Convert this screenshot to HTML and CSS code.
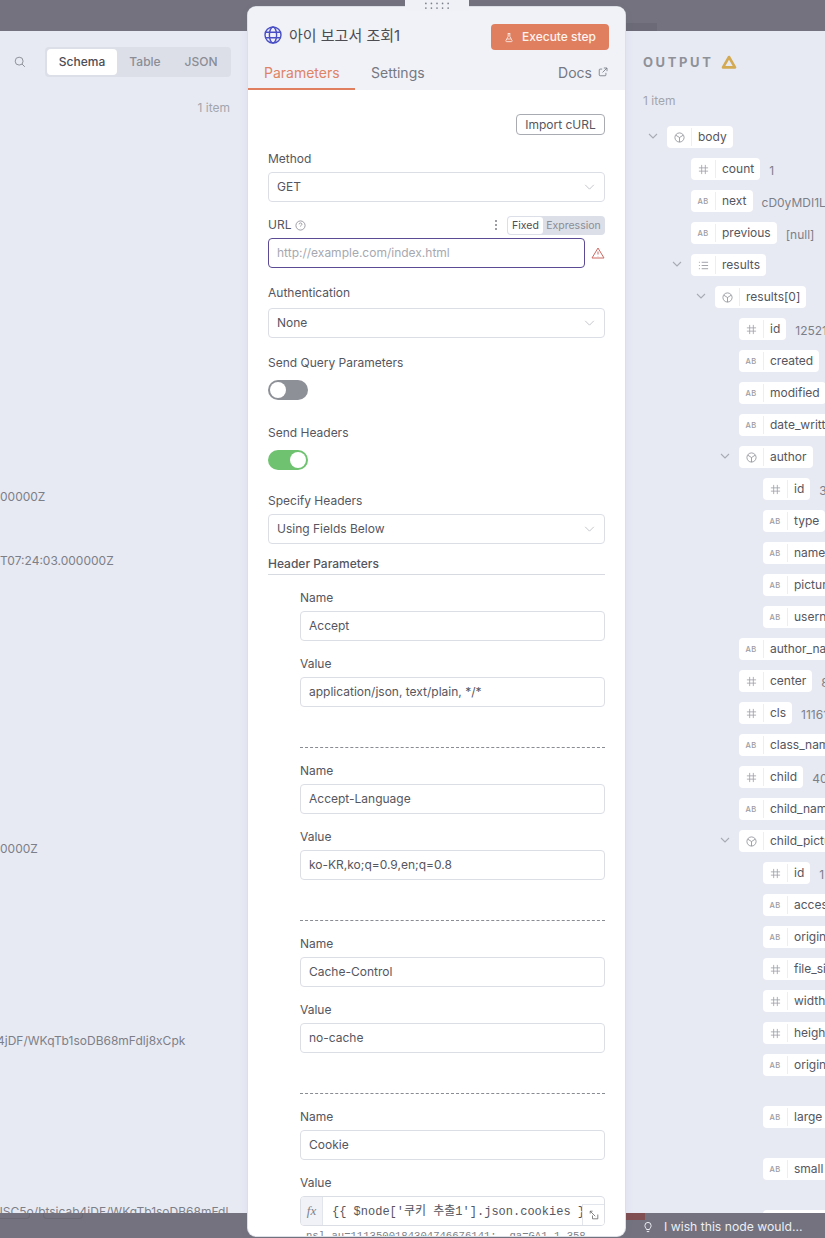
FILE: index.html
```html
<!DOCTYPE html>
<html lang="ko">
<head>
<meta charset="utf-8">
<title>아이 보고서 조회1</title>
<link rel="stylesheet" href="styles.css">
</head>
<body>
<div class="stage">
  <header class="topbar"><span class="topstrip"></span></header>

  <section class="input-pane">
    <div class="input-head">
      <svg class="search" viewBox="0 0 14 14"><circle cx="6" cy="6" r="4.6"/><path d="M9.400 9.400l3.200 3.200"/></svg>
      <div class="seg">
        <span class="seg-item on">Schema</span><span class="seg-item">Table</span><span class="seg-item">JSON</span>
      </div>
    </div>
    <div class="items">1 item</div>
    <div class="cut c1">00000Z</div>
    <div class="cut c2">T07:24:03.000000Z</div>
    <div class="cut c3">0000Z</div>
    <div class="cut c4">4jDF/WKqTb1soDB68mFdlj8xCpk</div>
    <div class="cut c5">JSC5o/btsjcab4jDF/WKqTb1soDB68mFdl</div>
  </section>

  <section class="output-pane">
    <div class="out-title"><span>OUTPUT</span>
      <svg class="warn-tri" viewBox="0 0 16 14"><path d="M8 2L14 12.400H2z"/></svg>
    </div>
    <div class="out-items">1 item</div>
    <div class="tree">
      <div class="row l0"><svg class="chev" viewBox="0 0 10 6"><path d="M1 1l4 4 4-4"/></svg><span class="pill"><span class="ico"><svg class="box" viewBox="0 0 12 12"><circle cx="6" cy="6" r="5"/><path d="M2 3.5L6 6l4-2.500M6 6v5"/></svg></span><span class="nm">body</span></span></div>
      <div class="row l1"><span class="pill"><span class="ico"><svg class="hash" viewBox="0 0 12 12"><path d="M4 1v10M8 1v10M1 4.200h10M1 7.800h10"/></svg></span><span class="nm">count</span></span><span class="val">1</span></div>
      <div class="row l1"><span class="pill"><span class="ico ab">AB</span><span class="nm">next</span></span><span class="val">cD0yMDI1L</span></div>
      <div class="row l1"><span class="pill"><span class="ico ab">AB</span><span class="nm">previous</span></span><span class="val">[null]</span></div>
      <div class="row l1"><svg class="chev" viewBox="0 0 10 6"><path d="M1 1l4 4 4-4"/></svg><span class="pill"><span class="ico"><svg class="lines" viewBox="0 0 12 12"><path d="M1 2.500h1M4 2.500h7M1 6h1M4 6h7M1 9.500h1M4 9.500h7"/></svg></span><span class="nm">results</span></span></div>
      <div class="row l2"><svg class="chev" viewBox="0 0 10 6"><path d="M1 1l4 4 4-4"/></svg><span class="pill"><span class="ico"><svg class="box" viewBox="0 0 12 12"><circle cx="6" cy="6" r="5"/><path d="M2 3.5L6 6l4-2.500M6 6v5"/></svg></span><span class="nm">results[0]</span></span></div>
      <div class="row l3"><span class="pill"><span class="ico"><svg class="hash" viewBox="0 0 12 12"><path d="M4 1v10M8 1v10M1 4.200h10M1 7.800h10"/></svg></span><span class="nm">id</span></span><span class="val">12521</span></div>
      <div class="row l3"><span class="pill"><span class="ico ab">AB</span><span class="nm">created</span></span></div>
      <div class="row l3"><span class="pill"><span class="ico ab">AB</span><span class="nm">modified</span></span></div>
      <div class="row l3"><span class="pill"><span class="ico ab">AB</span><span class="nm">date_written</span></span></div>
      <div class="row l3"><svg class="chev" viewBox="0 0 10 6"><path d="M1 1l4 4 4-4"/></svg><span class="pill"><span class="ico"><svg class="box" viewBox="0 0 12 12"><circle cx="6" cy="6" r="5"/><path d="M2 3.5L6 6l4-2.500M6 6v5"/></svg></span><span class="nm">author</span></span></div>
      <div class="row l4"><span class="pill"><span class="ico"><svg class="hash" viewBox="0 0 12 12"><path d="M4 1v10M8 1v10M1 4.200h10M1 7.800h10"/></svg></span><span class="nm">id</span></span><span class="val">3</span></div>
      <div class="row l4"><span class="pill"><span class="ico ab">AB</span><span class="nm">type</span></span></div>
      <div class="row l4"><span class="pill"><span class="ico ab">AB</span><span class="nm">name</span></span></div>
      <div class="row l4"><span class="pill"><span class="ico ab">AB</span><span class="nm">picture</span></span></div>
      <div class="row l4"><span class="pill"><span class="ico ab">AB</span><span class="nm">username</span></span></div>
      <div class="row l3"><span class="pill"><span class="ico ab">AB</span><span class="nm">author_name</span></span></div>
      <div class="row l3"><span class="pill"><span class="ico"><svg class="hash" viewBox="0 0 12 12"><path d="M4 1v10M8 1v10M1 4.200h10M1 7.800h10"/></svg></span><span class="nm">center</span></span><span class="val">8</span></div>
      <div class="row l3"><span class="pill"><span class="ico"><svg class="hash" viewBox="0 0 12 12"><path d="M4 1v10M8 1v10M1 4.200h10M1 7.800h10"/></svg></span><span class="nm">cls</span></span><span class="val">11161</span></div>
      <div class="row l3"><span class="pill"><span class="ico ab">AB</span><span class="nm">class_name</span></span></div>
      <div class="row l3"><span class="pill"><span class="ico"><svg class="hash" viewBox="0 0 12 12"><path d="M4 1v10M8 1v10M1 4.200h10M1 7.800h10"/></svg></span><span class="nm">child</span></span><span class="val">40</span></div>
      <div class="row l3"><span class="pill"><span class="ico ab">AB</span><span class="nm">child_name</span></span></div>
      <div class="row l3"><svg class="chev" viewBox="0 0 10 6"><path d="M1 1l4 4 4-4"/></svg><span class="pill"><span class="ico"><svg class="box" viewBox="0 0 12 12"><circle cx="6" cy="6" r="5"/><path d="M2 3.5L6 6l4-2.500M6 6v5"/></svg></span><span class="nm">child_picture</span></span></div>
      <div class="row l4"><span class="pill"><span class="ico"><svg class="hash" viewBox="0 0 12 12"><path d="M4 1v10M8 1v10M1 4.200h10M1 7.800h10"/></svg></span><span class="nm">id</span></span><span class="val">1</span></div>
      <div class="row l4"><span class="pill"><span class="ico ab">AB</span><span class="nm">access</span></span></div>
      <div class="row l4"><span class="pill"><span class="ico ab">AB</span><span class="nm">original</span></span></div>
      <div class="row l4"><span class="pill"><span class="ico"><svg class="hash" viewBox="0 0 12 12"><path d="M4 1v10M8 1v10M1 4.200h10M1 7.800h10"/></svg></span><span class="nm">file_size</span></span></div>
      <div class="row l4"><span class="pill"><span class="ico"><svg class="hash" viewBox="0 0 12 12"><path d="M4 1v10M8 1v10M1 4.200h10M1 7.800h10"/></svg></span><span class="nm">width</span></span></div>
      <div class="row l4"><span class="pill"><span class="ico"><svg class="hash" viewBox="0 0 12 12"><path d="M4 1v10M8 1v10M1 4.200h10M1 7.800h10"/></svg></span><span class="nm">height</span></span></div>
      <div class="row l4 tall"><span class="pill"><span class="ico ab">AB</span><span class="nm">original</span></span></div>
      <div class="row l4 tall"><span class="pill"><span class="ico ab">AB</span><span class="nm">large</span></span></div>
      <div class="row l4 tall"><span class="pill"><span class="ico ab">AB</span><span class="nm">small</span></span></div>
      <div class="row l4"><span class="pill empty"></span></div>
    </div>
  </section>

  <footer class="bottombar">
    <span class="ghost g1"></span>
    <span class="ghost g2"></span>
    <span class="redstrip"></span>
    <span class="wish">
      <svg class="bulb" viewBox="0 0 12 14"><path d="M4.200 10C4 8.500 2.300 7.800 2.300 5.200a3.700 3.700 0 0 1 7.400 0C9.700 7.800 8 8.500 7.800 10zM4.500 12.500h3"/></svg>
      I wish this node would...
    </span>
  </footer>

  <main class="panel">
    <div class="panel-head">
      <div class="title-row">
        <svg class="globe" viewBox="0 0 18 18"><circle cx="9" cy="9" r="8"/><ellipse cx="9" cy="9" rx="3.600" ry="8"/><path d="M1.700 6.200h14.600M1.700 11.800h14.600"/></svg>
        <h1 class="title">아이 보고서 조회1</h1>
        <button class="exec"><svg class="flask" viewBox="0 0 12 12"><path d="M4.500 1.200h3M5 1.200v3.600L2.300 9.600c-.4.700.1 1.400.8 1.400h5.800c.7 0 1.200-.7.800-1.400L7 4.800V1.200M3.800 7.800h4.400"/></svg>Execute step</button>
      </div>
      <div class="tabs">
        <span class="tab active">Parameters</span>
        <span class="tab">Settings</span>
        <span class="tab docs">Docs <svg class="ext" viewBox="0 0 12 12"><path d="M9.500 7v2.500a1 1 0 0 1-1 1h-6a1 1 0 0 1-1-1v-6a1 1 0 0 1 1-1H5M7 1.200h3.800V5M10.800 1.200L5.500 6.500"/></svg></span>
      </div>
    </div>
    <div class="body">
      <div class="import-row"><button class="import">Import cURL</button></div>

      <div class="label lb-method">Method</div>
      <div class="input select">GET<svg class="sel-chev" viewBox="0 0 12 7"><path d="M1 1l5 5 5-5"/></svg></div>

      <div class="label-row">
        <span class="label flat">URL</span>
        <svg class="help" viewBox="0 0 12 12"><circle cx="6" cy="6" r="5"/><path d="M4.500 4.700a1.500 1.500 0 1 1 2.200 1.300c-.5.300-.7.500-.7 1M6 8.800v.1"/></svg>
        <span class="spacer"></span>
        <svg class="dots" viewBox="0 0 4 12"><circle cx="2" cy="2" r="1"/><circle cx="2" cy="6" r="1"/><circle cx="2" cy="10" r="1"/></svg>
        <div class="fx-toggle"><span class="fx-on">Fixed</span><span class="fx-off">Expression</span></div>
      </div>
      <div class="url-row">
        <div class="input url">http://example.com/index.html</div>
        <svg class="warn" viewBox="0 0 14 12"><path d="M7 1L13 11H1z"/><path d="M7 4.500v3M7 9v.3"/></svg>
      </div>

      <div class="label lb-auth">Authentication</div>
      <div class="input select">None<svg class="sel-chev" viewBox="0 0 12 7"><path d="M1 1l5 5 5-5"/></svg></div>

      <div class="label lb-query">Send Query Parameters</div>
      <div class="switch off"><span class="knob"></span></div>

      <div class="label lb-send">Send Headers</div>
      <div class="switch on"><span class="knob"></span></div>

      <div class="label lb-spec">Specify Headers</div>
      <div class="input select">Using Fields Below<svg class="sel-chev" viewBox="0 0 12 7"><path d="M1 1l5 5 5-5"/></svg></div>

      <div class="section-title">Header Parameters</div>

      <div class="params">
        <div class="param">
          <div class="label">Name</div>
          <div class="input">Accept</div>
          <div class="label val-label">Value</div>
          <div class="input">application/json, text/plain, */*</div>
        </div>
        <div class="param">
          <div class="label">Name</div>
          <div class="input">Accept-Language</div>
          <div class="label val-label">Value</div>
          <div class="input">ko-KR,ko;q=0.9,en;q=0.8</div>
        </div>
        <div class="param">
          <div class="label">Name</div>
          <div class="input">Cache-Control</div>
          <div class="label val-label">Value</div>
          <div class="input">no-cache</div>
        </div>
        <div class="param last">
          <div class="label">Name</div>
          <div class="input">Cookie</div>
          <div class="label val-label">Value</div>
          <div class="expr">
            <span class="fx">fx</span>
            <span class="code">{{ $node['쿠키 추출1'].json.cookies }}</span>
            <span class="pop"><svg viewBox="0 0 10 10"><path d="M1.200 3.600V1.200h2.400M1.200 1.200l5 5M8.800 4.500v4.300H3.500V5.500"/></svg></span>
          </div>
          <div class="preview">nsl_au=1113500184304746676141; _ga=GA1.1.358</div>
        </div>
      </div>
    </div>
  </main>

  <div class="grip"><svg viewBox="0 0 28 8"><g><circle cx="2" cy="1.500" r=".9"/><circle cx="8" cy="1.500" r=".9"/><circle cx="14" cy="1.500" r=".9"/><circle cx="20" cy="1.500" r=".9"/><circle cx="26" cy="1.500" r=".9"/><circle cx="2" cy="6.500" r=".9"/><circle cx="8" cy="6.500" r=".9"/><circle cx="14" cy="6.500" r=".9"/><circle cx="20" cy="6.500" r=".9"/><circle cx="26" cy="6.500" r=".9"/></g></svg></div>
</div>
</body>
</html>
```
FILE: styles.css
```css
* { box-sizing: border-box; }
html, body { margin: 0; padding: 0; }
body {
  font-family: Inter, "Noto Sans CJK KR", sans-serif;
  color: #555;
  background: #e7eaf3;
}
.stage {
  position: relative;
  width: 825px;
  height: 1238px;
  overflow: hidden;
  background: #e7eaf3;
}
.topbar {
  position: absolute; left: 0; top: 0; right: 0; height: 31px;
  background: #73727e;
}
.topstrip {
  position: absolute; left: 626px; top: 23px; width: 31px; height: 8px;
  background: #6b6a76;
}
.bottombar {
  position: absolute; left: 0; right: 0; bottom: 0; height: 25px;
  background: #73727e;
  color: #eceef4;
  font-size: 12.200px;
}
.ghost { position: absolute; top: 0; height: 6px; border: 1px solid #696873; border-top: 0; border-radius: 0 0 4px 4px; }
.g1 { left: -6px; width: 36px; }
.g2 { left: 43px; width: 40px; }
.redstrip {
  position: absolute; left: 625px; top: 0; width: 20px; height: 7px;
  background: #7f4f52;
}
.wish {
  position: absolute; left: 643px; top: 6px;
  display: flex; align-items: center; gap: 11px;
  white-space: nowrap;
}
.bulb { width: 10px; height: 12px; fill: none; stroke: #eceef4; stroke-width: 1.200; }

/* input pane */
.input-pane { position: absolute; left: 0; top: 31px; width: 248px; height: 1182px; overflow: hidden; }
.input-head { position: absolute; top: 16px; right: 17px; display: flex; align-items: center; gap: 19px; }
.search { width: 12px; height: 12px; fill: none; stroke: #8a8c94; stroke-width: 1.100; }
.seg {
  display: flex; height: 30px; padding: 2px;
  background: #dcdfe8; border-radius: 4px;
}
.seg-item {
  display: flex; align-items: center; justify-content: center;
  font-size: 12px; color: #8b8d96; font-weight: 500; height: 26px; padding-bottom: 2px;
}
.seg-item:nth-child(2) { width: 56px; }
.seg-item:nth-child(3) { width: 56px; }
.seg-item.on { width: 70px; background: #fff; color: #4d4d55; border-radius: 4px; }
.items { position: absolute; top: 69px; right: 18px; font-size: 12px; color: #a3a5ad; }
.cut { position: absolute; left: 0; font-size: 12px; color: #7d7f88; white-space: nowrap; line-height: 16px; }
.c1 { top: 458px; }
.c2 { top: 522px; }
.c3 { top: 810px; }
.c4 { top: 1002px; left: -3px; }
.c5 { top: 1173px; left: -4px; }

/* output pane */
.output-pane { position: absolute; left: 626px; top: 31px; width: 199px; height: 1182px; overflow: hidden; }
.out-title {
  position: absolute; left: 17px; top: 22px;
  display: flex; align-items: center; gap: 8px;
  font-size: 13px; font-weight: 700; color: #8f9199; letter-spacing: 2.600px; line-height: 18px;
}
.warn-tri { width: 16px; height: 14px; fill: none; stroke: #d3a952; stroke-width: 2.600; stroke-linejoin: round; }
.out-items { position: absolute; left: 17px; top: 62px; font-size: 12px; color: #a3a5ad; line-height: 16px; }
.tree { position: absolute; left: 0; top: 95px; display: flex; flex-direction: column; width: 500px; }
.row { height: 32px; display: flex; align-items: flex-start; position: relative; white-space: nowrap; }
.row.tall { height: 52px; }
.l0 { padding-left: 41px; }
.l1 { padding-left: 65px; }
.l2 { padding-left: 89px; }
.l3 { padding-left: 113px; }
.l4 { padding-left: 137px; }
.chev {
  position: absolute; width: 10px; height: 6px; margin-left: -19px; top: 7px;
  fill: none; stroke: #a8abb3; stroke-width: 1.100;
}
.pill {
  display: inline-flex; align-items: center; height: 22px;
  background: #fff; border-radius: 4px; padding: 2px 6px 2px 0;
  font-size: 12px; color: #555660;
}
.pill.empty { width: 90px; }
.ico {
  width: 25px; height: 18px; border-right: 1px solid #eceef2;
  display: flex; align-items: center; justify-content: center;
  color: #9a9ca4; flex: none;
}
.hash { width: 11px; height: 11px; fill: none; stroke: #a0a2aa; stroke-width: .9; }
.ab { font-size: 7.500px; font-weight: 500; letter-spacing: .3px; }
.box, .lines { width: 11px; height: 11px; fill: none; stroke: #8e9098; stroke-width: .9; }
.nm { padding-left: 6px; line-height: 18px; }
.val { font-size: 12px; color: #7d7f88; margin-left: 9px; line-height: 16px; margin-top: 5px; }

/* panel */
.panel {
  position: absolute; left: 248px; top: 7px; width: 377px; height: 1229px;
  background: #fff; border-radius: 8px; overflow: hidden;
  box-shadow: 0 0 0 1px #dcdfe6, 0 2px 10px rgba(90, 95, 120, .08);
}
.grip {
  position: absolute; left: 405px; top: 0; width: 64px; height: 11px;
  background: #eff1f7; display: flex; justify-content: center; padding-top: 2px;
}
.grip svg { width: 26px; height: 7.500px; fill: #7d7f88; }
.panel-head { background: #f0f2f8; height: 83px; padding: 17px 16px 0 16px; }
.title-row { display: flex; align-items: flex-start; height: 26px; }
.globe { width: 18px; height: 18px; fill: none; stroke: #4a4fc4; stroke-width: 1.400; flex: none; margin-top: 2px; }
.title { margin: 3px 0 0 7px; font-size: 15px; font-weight: 400; line-height: 18px; color: #4c4c52; flex: 1; }
.exec {
  display: flex; align-items: center; justify-content: center; gap: 8px;
  width: 118px; height: 26px; background: #df7f60; color: #fdf3ef;
  border: 0; border-radius: 4px; font: 500 12px Inter, sans-serif; padding: 0 0 2px;
}
.flask { width: 10px; height: 11px; fill: none; stroke: #fdf3ef; stroke-width: 1; margin-top: 2px; }
.tabs { display: flex; margin: 0 -16px; height: 40px; align-items: flex-start; }
.tab { font-size: 14px; color: #767881; padding-top: 12px; line-height: 22px; }
.tab.active { color: #df8364; width: 107px; padding-left: 16px; height: 40px; border-bottom: 2px solid #df7f60; }
.tab:nth-child(2) { margin-left: 16px; }
.tab.docs { margin-left: auto; margin-right: 17px; display: flex; align-items: center; gap: 6px; height: 34px; }
.ext { width: 10px; height: 10px; fill: none; stroke: #767881; stroke-width: 1; margin-top: -2px; }

.body { padding: 0 20px; height: 1146px; overflow: hidden; position: relative; }
.import-row { display: flex; justify-content: flex-end; padding-top: 24px; height: 49px; }
.import {
  width: 89px; height: 21px; background: #fff; border: 1px solid #a9abb2; border-radius: 4px;
  font: 400 12px Inter, sans-serif; color: #555660; padding: 0;
}
.label { font-size: 12px; color: #555660; line-height: 16px; }
.lb-method { margin-top: 12px; margin-bottom: 5px; }
.lb-auth { margin-top: 17px; margin-bottom: 7px; }
.lb-query { margin-top: 17px; margin-bottom: 9px; }
.lb-send { margin-top: 25px; margin-bottom: 9px; }
.lb-spec { margin-top: 23px; margin-bottom: 5px; }
.flat { display: inline-block; }
.input {
  height: 30px; border: 1px solid #dcdee5; border-radius: 4px;
  font-size: 12px; color: #555660; padding: 0 8px 2px; display: flex; align-items: center;
  background: #fff; position: relative;
}
.select { justify-content: space-between; }
.sel-chev { width: 11px; height: 6px; fill: none; stroke: #bbbdc5; stroke-width: 1; margin-right: 1px; margin-top: 2px; }
.label-row { display: flex; align-items: center; height: 20px; margin-top: 13px; margin-bottom: 3px; }
.help { width: 11px; height: 11px; fill: none; stroke: #8a8c94; stroke-width: .9; margin-left: 4px; }
.spacer { flex: 1; }
.dots { width: 4px; height: 12px; fill: #7d7f88; margin-right: 9px; }
.fx-toggle {
  display: flex; align-items: center; height: 19px; width: 98px; background: #dcdfe8; border-radius: 4px; padding: 1px;
  font-size: 10.500px; font-weight: 400;
}
.fx-on { background: #fff; border-radius: 3px; height: 17px; width: 35px; display: flex; align-items: center; justify-content: center; color: #4d4d55; }
.fx-off { flex: 1; text-align: center; color: #8b8d96; }
.url-row { display: flex; align-items: center; justify-content: space-between; }
.url { width: 317px; border: 1px solid #5b4a94; color: #a6a8b0; }
.warn { width: 14px; height: 12px; fill: none; stroke: #cd6a63; stroke-width: 1; }
.switch { width: 40px; height: 20px; border-radius: 10px; position: relative; }
.switch.off { background: #8e9098; }
.switch.on { background: #6fc270; }
.knob { position: absolute; top: 2px; width: 16px; height: 16px; border-radius: 50%; background: #fff; }
.off .knob { left: 2px; }
.on .knob { right: 2px; }
.section-title { font-size: 12px; font-weight: 500; color: #555660; margin-top: 12px; height: 19px; line-height: 16px; border-bottom: 1px solid #d8dae1; }
.params { padding-left: 32px; }
.param { padding-top: 15px; height: 173px; border-bottom: 1px dashed #8a8c94; }
.param .label { margin-bottom: 5px; }
.param .val-label { margin-top: 15px; }
.param.last { border-bottom: 0; height: 200px; position: relative; }
.expr {
  height: 30px; border: 1px solid #dcdee5; border-radius: 4px; display: flex; align-items: center; position: relative; overflow: hidden; background: #fff;
}
.fx { width: 22px; height: 100%; background: #f0f2f8; flex: none; display: flex; align-items: center; justify-content: center; font: italic 13px "Liberation Serif", serif; color: #7d7f88; border-right: 1px solid #e3e5ec; }
.code { font: 12px "Liberation Mono", "Noto Sans CJK KR", monospace; color: #555660; padding-left: 9px; white-space: nowrap; margin-top: -2px; }
.pop { position: absolute; right: 0; bottom: 0; width: 22px; height: 21px; background: #fff; border: 1px solid #e3e5ec; border-right: 0; border-bottom: 0; display: flex; align-items: center; justify-content: center; }
.pop svg { width: 10px; height: 10px; fill: none; stroke: #666; stroke-width: .8; }
.preview { font: 10.600px "Liberation Mono", monospace; color: #7d7f88; padding-left: 6px; white-space: nowrap; line-height: 15px; margin-top: 3px; }
```
